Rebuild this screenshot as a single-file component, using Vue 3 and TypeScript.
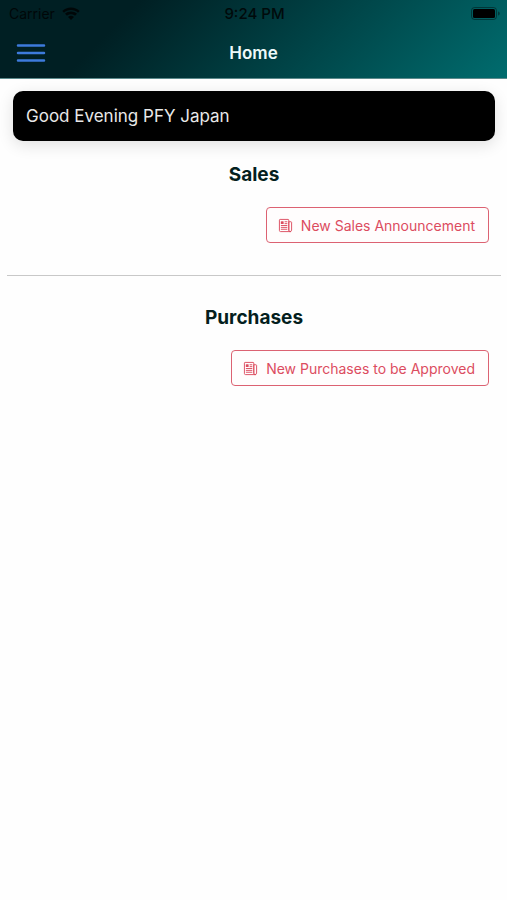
<script setup lang="ts">
interface Section {
  title: string
  action: string
}

const greeting = 'Good Evening PFY Japan'

const sections: Section[] = [
  { title: 'Sales', action: 'New Sales Announcement' },
  { title: 'Purchases', action: 'New Purchases to be Approved' },
]
</script>

<template>
  <div class="app">
    <header class="header">
      <div class="status">
        <div class="carrier">
          <span>Carrier</span>
          <svg class="wifi" viewBox="0 0 18 14" aria-hidden="true">
            <path d="M9 0.5C5.6 0.5 2.500 1.800 0.300 4L2 5.700C3.800 3.900 6.300 2.900 9 2.900S14.200 3.900 16 5.700L17.700 4C15.500 1.800 12.400 0.500 9 0.500Z" />
            <path d="M9 4.500C6.800 4.500 4.600 5.300 3 6.800L5 8.800C6.100 7.800 7.500 7.300 9 7.300S11.900 7.800 13 8.800L15 6.800C13.400 5.300 11.200 4.500 9 4.500Z" />
            <path d="M9 8.800C8 8.800 6.800 9.200 6 9.900L9 13L12 9.900C11.200 9.200 10 8.800 9 8.800Z" />
          </svg>
        </div>
        <time class="clock">9:24 PM</time>
        <svg class="battery" viewBox="0 0 30 14" aria-hidden="true">
          <rect class="battery-shell" x="1.500" y="0.500" width="25" height="12" rx="3" />
          <rect x="3" y="2" width="22" height="9" rx="1.500" />
          <path class="battery-tip" d="M28 4.500C29.200 4.900 29.800 5.600 29.800 6.500S29.200 8.100 28 8.500Z" />
        </svg>
      </div>
      <div class="toolbar">
        <button class="menu" type="button" aria-label="Menu">
          <svg viewBox="0 0 30 20" aria-hidden="true">
            <path d="M2 2.500H28M2 10H28M2 17.500H28" />
          </svg>
        </button>
        <h1>Home</h1>
      </div>
    </header>

    <main class="content">
      <p class="greeting">{{ greeting }}</p>
      <section v-for="section in sections" :key="section.title" class="section">
        <h2>{{ section.title }}</h2>
        <button class="action" type="button">
          <svg viewBox="0 0 512 512" aria-hidden="true">
            <path d="M368 415.860V72a24.070 24.070 0 00-24-24H72a24.070 24.070 0 00-24 24v352a40.120 40.120 0 0040 40h328" />
            <path d="M416 464a48 48 0 01-48-48V128h72a24 24 0 0124 24v264a48 48 0 01-48 48z" />
            <path d="M240 128h64M240 192h64M112 256h192M112 320h192M112 384h192" />
            <path class="block" d="M176 208h-64a16 16 0 01-16-16v-64a16 16 0 0116-16h64a16 16 0 0116 16v64a16 16 0 01-16 16z" />
          </svg>
          <span>{{ section.action }}</span>
        </button>
      </section>
    </main>
  </div>
</template>

<style>
body {
  margin: 0;
  background: #fefefe;
}
</style>

<style scoped>
.app {
  min-height: 100vh;
  font-family: Inter, "Liberation Sans", sans-serif;
  color: #041e20;
}

.header {
  background: linear-gradient(135deg, #001f23 24%, #006c6e 100%);
  border-bottom: 1px solid #5b8a8c;
}

.status {
  display: grid;
  grid-template-columns: 1fr auto 1fr;
  align-items: center;
  height: 27px;
  padding: 0 7px 0 9px;
  font-size: 14px;
  color: #000;
}

.carrier {
  display: flex;
  align-items: center;
  gap: 7px;
  opacity: 0.75;
}

.wifi {
  width: 18px;
  height: 14px;
}

.clock {
  font-size: 15px;
  font-weight: 500;
  opacity: 0.8;
}

.battery {
  justify-self: end;
  width: 30px;
  height: 14px;
}

.battery-shell {
  fill: none;
  stroke: #000;
  opacity: 0.4;
}

.battery-tip {
  opacity: 0.4;
}

.toolbar {
  display: grid;
  grid-template-columns: 1fr auto 1fr;
  align-items: center;
  height: 51px;
  padding: 0 16px;
}

.menu {
  justify-self: start;
  display: flex;
  padding: 0;
  border: 0;
  background: none;
}

.menu svg {
  width: 30px;
  height: 20px;
  fill: none;
  stroke: #3d7bdc;
  stroke-width: 2.500;
  stroke-linecap: round;
}

h1 {
  margin: 0;
  font-size: 17px;
  font-weight: 600;
  line-height: 22px;
  color: #eefafa;
}

.content {
  padding: 12px 6px 0 7px;
}

.greeting {
  margin: 0 6px 21px;
  padding: 13px;
  border-radius: 10px;
  background: #000;
  box-shadow: 0 4px 16px rgba(0, 0, 0, 0.12);
  font-size: 17px;
  line-height: 24px;
  color: #e8e8e8;
}

.section {
  display: flex;
  flex-direction: column;
  padding-bottom: 32px;
}

.section + .section {
  padding-top: 29px;
  border-top: 1px solid #c8c8c8;
}

h2 {
  margin: 0 0 19px;
  font-size: 19px;
  font-weight: 700;
  line-height: 26px;
  text-align: center;
}

.action {
  align-self: flex-end;
  display: flex;
  align-items: center;
  gap: 8px;
  height: 36px;
  margin-right: 12px;
  padding: 0 13px 0 11px;
  border: 1px solid #dc6272;
  border-radius: 4px;
  background: #fffdfd;
  font-family: inherit;
  font-size: 14px;
  color: #dc4c5f;
}

.action svg {
  width: 15px;
  height: 15px;
  fill: none;
  stroke: currentColor;
  stroke-width: 32;
  stroke-linecap: round;
  stroke-linejoin: round;
}

.action .block {
  fill: currentColor;
  stroke: none;
}
</style>
